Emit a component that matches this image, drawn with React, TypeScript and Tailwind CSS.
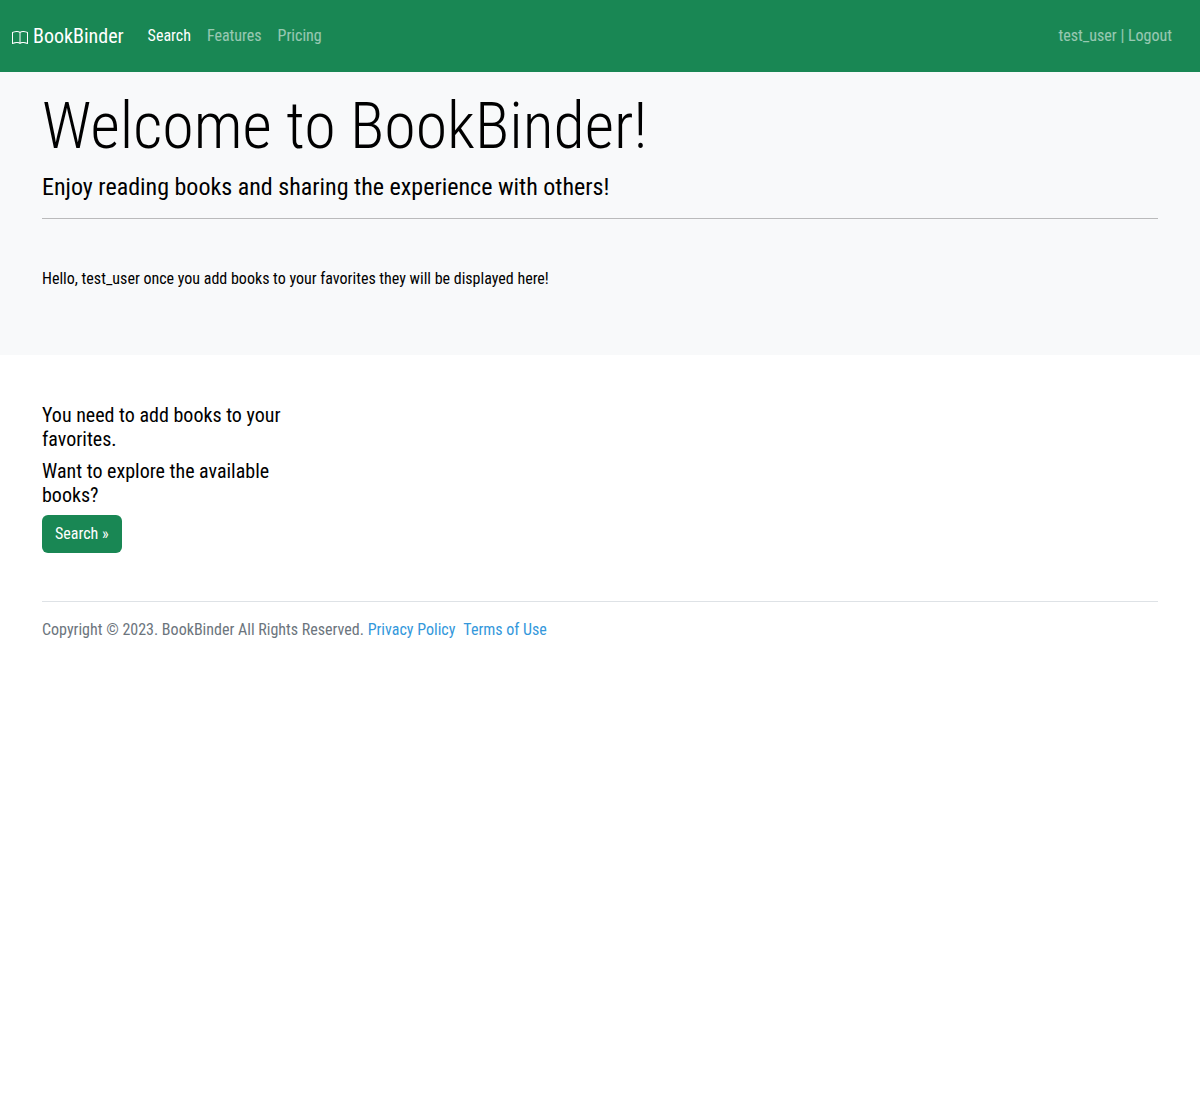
import React from 'react';

function BookIcon() {
  return (
    <svg width="16" height="16" viewBox="0 0 16 16" fill="currentColor" aria-hidden="true" className="mt-1 shrink-0">
      <path d="M1 2.828c.885-.37 2.154-.769 3.388-.893 1.33-.134 2.458.063 3.112.752v9.746c-.935-.53-2.12-.603-3.213-.493-1.18.12-2.37.461-3.287.811zm7.5-.141c.654-.689 1.782-.886 3.112-.752 1.234.124 2.503.523 3.388.893v9.923c-.918-.35-2.107-.692-3.287-.81-1.094-.111-2.278-.039-3.213.492zM8 1.783C7.015.936 5.587.81 4.287.94c-1.514.153-3.042.672-3.994 1.105A.5.5 0 0 0 0 2.5v11a.5.5 0 0 0 .707.455c.882-.4 2.303-.881 3.68-1.02 1.409-.142 2.59.087 3.223.877a.5.5 0 0 0 .78 0c.633-.79 1.814-1.019 3.222-.877 1.378.139 2.8.62 3.681 1.02A.5.5 0 0 0 16 13.5v-11a.5.5 0 0 0-.293-.455c-.952-.433-2.48-.952-3.994-1.105C10.413.809 8.985.936 8 1.783" />
    </svg>
  );
}

export default function App() {
  return (
    <div className="font-['Roboto_Condensed','Roboto',sans-serif] text-base leading-6 text-black">
      <nav className="flex items-center bg-[#198754] px-3 py-4 text-white/55">
        <a href="#" className="mr-4 flex items-center gap-[5px] text-xl leading-[30px] text-white">
          <BookIcon />
          BookBinder
        </a>
        <div className="flex">
          <a href="#search" className="p-2 text-white">Search</a>
          <a href="#features" className="p-2">Features</a>
          <a href="#pricing" className="p-2">Pricing</a>
        </div>
        <div className="ml-auto pr-4">
          <a href="#user">test_user</a> | <a href="#logout">Logout</a>
        </div>
      </nav>
      <header className="bg-[#f8f9fa] px-[42px] pt-4 pb-16">
        <h1 className="mb-2 text-[64px] leading-[77px] font-light">Welcome to BookBinder!</h1>
        <p className="text-2xl leading-[29px]">Enjoy reading books and sharing the experience with others!</p>
        <hr className="mt-4 mb-12 border-black/25" />
        <p>Hello, test_user once you add books to your favorites they will be displayed here!</p>
      </header>
      <main className="px-[42px] pt-12">
        <section className="w-1/4 pr-6 text-xl leading-6">
          <h2 className="mb-2">You need to add books to your favorites.</h2>
          <h2 className="mb-2">Want to explore the available books?</h2>
          <button type="button" className="rounded-md bg-[#198754] px-[13px] py-[7px] text-base leading-6 text-white">Search »</button>
        </section>
        <footer className="mt-12 border-t border-[#dee2e6] pt-4 text-[#6c757d]">
          Copyright © 2023. BookBinder All Rights Reserved. <a href="#privacy" className="text-[#3498db]">Privacy Policy</a>
          <a href="#terms" className="ml-2 text-[#3498db]">Terms of Use</a>
        </footer>
      </main>
    </div>
  );
}
